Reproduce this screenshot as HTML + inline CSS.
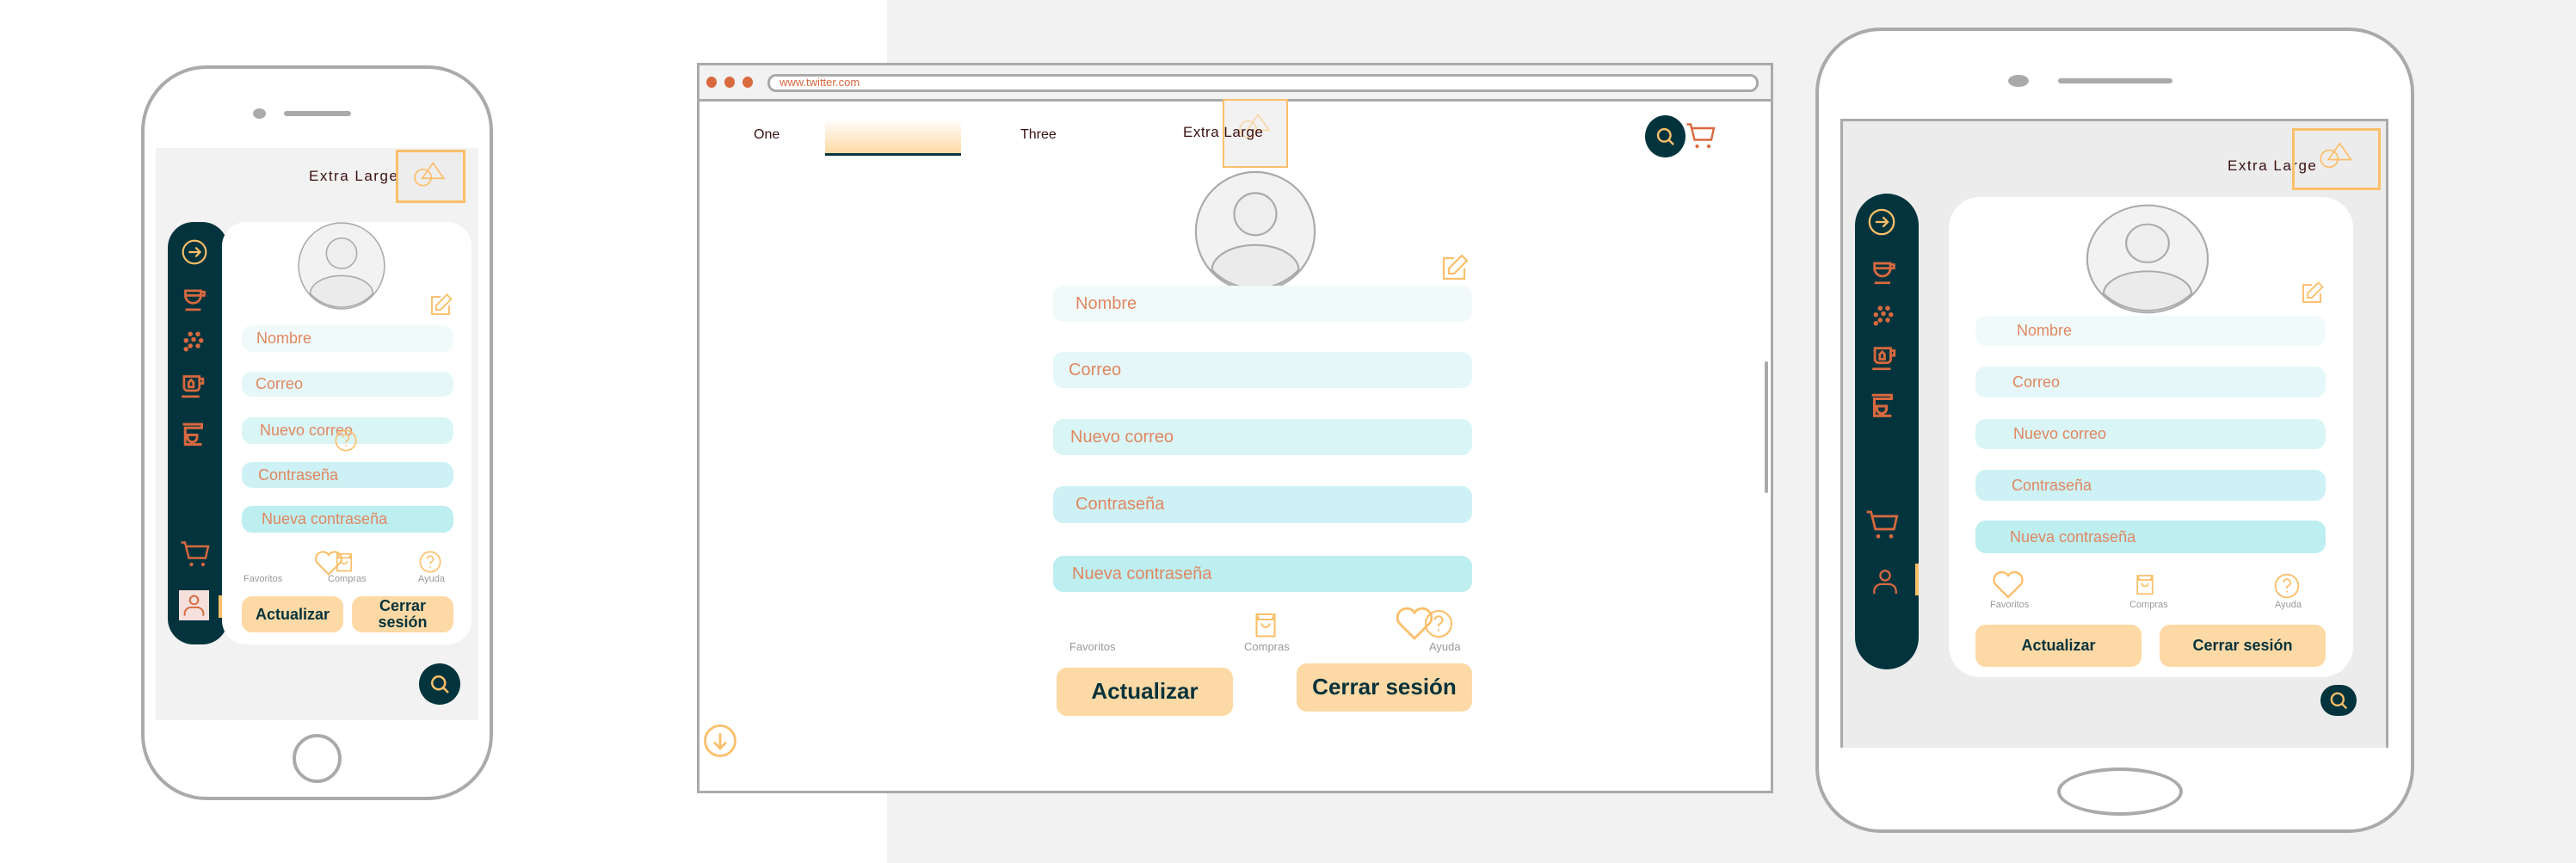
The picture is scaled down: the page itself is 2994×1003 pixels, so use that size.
<!DOCTYPE html>
<html><head><meta charset="utf-8">
<style>
*{margin:0;padding:0;box-sizing:border-box}
body{width:2994px;height:1003px;position:relative;overflow:hidden;background:#fff;font-family:"Liberation Sans",sans-serif}
.a{position:absolute}
.inp{position:absolute;border-radius:12px;color:#e08760;display:flex;align-items:center}
.btn{position:absolute;background:#fdd9a5;border-radius:12px;color:#05323b;font-weight:bold;display:flex;align-items:center;justify-content:center;text-align:center;line-height:1.05}
.lbl{position:absolute;color:#999;font-size:12px}
.xl{position:absolute;color:#3a1010;font-family:"Liberation Sans",sans-serif;letter-spacing:1.5px;white-space:nowrap}
.obox{position:absolute;border:3px solid #fbbf6a;background:#ededed}
svg.i{position:absolute;overflow:visible}
</style></head><body>
<svg width="0" height="0" style="position:absolute">
<defs>
<symbol id="arrow" viewBox="0 0 24 24"><circle cx="12" cy="12" r="10" fill="none" stroke="#fbbf6a" stroke-width="1.6"/><path d="M7 12h10M13 8l4 4-4 4" fill="none" stroke="#fbbf6a" stroke-width="1.6"/></symbol>
<symbol id="cup" viewBox="0 0 24 24"><path d="M4 5h13v4a6.5 6.5 0 0 1-13 0zM4 9h13M17 6h3v3h-3M4 21h13" fill="none" stroke="#d9693f" stroke-width="2"/></symbol>
<symbol id="dots" viewBox="0 0 24 24" fill="#d9693f"><circle cx="9" cy="5" r="2.2"/><circle cx="16" cy="5" r="2.2"/><circle cx="5" cy="11" r="2.2"/><circle cx="12" cy="10" r="2.2"/><circle cx="19" cy="11" r="2.2"/><circle cx="9" cy="16" r="2.2"/><circle cx="16" cy="16" r="2.2"/><circle cx="5" cy="19" r="2.2"/></symbol>
<symbol id="mug" viewBox="0 0 24 24"><path d="M5 4h13v9a3 3 0 0 1-3 3H8a3 3 0 0 1-3-3zM18 6h3v4h-3M3 21h15M9 9l2-2 2 2v4H9z" fill="none" stroke="#d9693f" stroke-width="2"/></symbol>
<symbol id="mach" viewBox="0 0 24 24"><path d="M4 3h16v3H6v14h14M7 6h10M8 12h8v2a4 4 0 0 1-8 0z" fill="none" stroke="#d9693f" stroke-width="2.2"/></symbol>
<symbol id="cart" viewBox="0 0 24 24"><path d="M1 3h3l3 12h13l2-9H5" fill="none" stroke="#d9693f" stroke-width="1.6"/><circle cx="9" cy="20" r="1.4" fill="#d9693f"/><circle cx="18" cy="20" r="1.4" fill="#d9693f"/></symbol>
<symbol id="user" viewBox="0 0 24 24"><circle cx="12" cy="7" r="4" fill="none" stroke="#d9693f" stroke-width="1.6"/><path d="M3 22v-2a6 6 0 0 1 6-6h6a6 6 0 0 1 6 6v2" fill="none" stroke="#d9693f" stroke-width="1.6"/></symbol>
<symbol id="heart" viewBox="0 0 24 24"><path d="M12 21L3 12a5 5 0 0 1 9-6 5 5 0 0 1 9 6z" fill="none" stroke="#fbbf6a" stroke-width="1.4"/></symbol>
<symbol id="bag" viewBox="0 0 24 24"><path d="M5 4h14v17H5zM5 8h14M5 4l2 4M19 4l-2 4M9 11a3 3 0 0 0 6 0" fill="none" stroke="#fbbf6a" stroke-width="1.4"/></symbol>
<symbol id="help" viewBox="0 0 24 24"><circle cx="12" cy="12" r="10" fill="none" stroke="#fbbf6a" stroke-width="1.4"/><path d="M9 9a3 3 0 1 1 4 3c-1 .5-1 1-1 2" fill="none" stroke="#fbbf6a" stroke-width="1.4"/><circle cx="12" cy="17" r=".8" fill="#fbbf6a"/></symbol>
<symbol id="edit" viewBox="0 0 24 24"><path d="M12 4H4v16h16v-8M18 2l4 4-10 10H8v-4z" fill="none" stroke="#fbbf6a" stroke-width="1.5"/></symbol>
<symbol id="shape" viewBox="0 0 40 30"><circle cx="13" cy="19" r="9" fill="none" stroke="#fbbf6a" stroke-width="1.6"/><path d="M24 3L36 20H12z" fill="none" stroke="#fbbf6a" stroke-width="1.6"/></symbol>
<symbol id="search" viewBox="0 0 24 24"><circle cx="11" cy="11" r="6" fill="none" stroke="#fbbf6a" stroke-width="2"/><path d="M15.5 15.5L20 20" stroke="#fbbf6a" stroke-width="2"/></symbol>
<symbol id="avatar" viewBox="0 0 100 100" preserveAspectRatio="none"><circle cx="50" cy="50" r="48" fill="#f2f2f2" stroke="#aaa" stroke-width="1.5"/><circle cx="50" cy="36" r="17" fill="#eee" stroke="#aaa" stroke-width="1.5"/><path d="M15 81a35 20 0 0 1 70 0a48 48 0 0 1-70 0z" fill="#ebebeb" stroke="#aaa" stroke-width="1.5"/></symbol>
</defs></svg>

<div class="a" style="left:1031px;top:0;width:1963px;height:1003px;background:#f2f2f2"></div>

<!-- PHONE -->
<div class="a" style="left:164px;top:76px;width:409px;height:854px;border:4px solid #aaa;border-radius:76px;background:#fff"></div>
<div class="a" style="left:294px;top:126px;width:15px;height:12px;border-radius:50%;background:#aaa"></div>
<div class="a" style="left:330px;top:129px;width:78px;height:6px;border-radius:3px;background:#aaa"></div>
<div class="a" style="left:340px;top:853px;width:57px;height:57px;border:4px solid #aaa;border-radius:50%"></div>
<div class="a" style="left:181px;top:172px;width:375px;height:665px;background:#f2f2f2"></div>
<div class="xl" style="left:359px;top:195px;font-size:17px">Extra Large</div>
<div class="obox" style="left:460px;top:174px;width:81px;height:62px"></div>
<svg class="i" style="left:478px;top:186px" width="42" height="32"><use href="#shape"/></svg>
<div class="a" style="left:195px;top:258px;width:70px;height:491px;background:#03343d;border-radius:30px"></div>
<div class="a" style="left:258px;top:258px;width:290px;height:491px;background:#fff;border-radius:28px"></div>
<svg class="i" style="left:210px;top:277px" width="32" height="32"><use href="#arrow"/></svg>
<svg class="i" style="left:210px;top:331px" width="33" height="33"><use href="#cup"/></svg>
<svg class="i" style="left:210px;top:382px" width="30" height="30"><use href="#dots"/></svg>
<svg class="i" style="left:207px;top:432px" width="33" height="33"><use href="#mug"/></svg>
<svg class="i" style="left:207px;top:489px" width="33" height="33"><use href="#mach"/></svg>
<svg class="i" style="left:209px;top:626px" width="36" height="36"><use href="#cart"/></svg>
<div class="a" style="left:208px;top:686px;width:35px;height:35px;background:#f5e0db"></div>
<svg class="i" style="left:211px;top:689px" width="29" height="29"><use href="#user"/></svg>
<div class="a" style="left:254px;top:692px;width:4px;height:26px;background:#fbbf6a"></div>
<svg class="i" style="left:345px;top:257px" width="104" height="104"><use href="#avatar"/></svg>
<svg class="i" style="left:497px;top:340px" width="30" height="30"><use href="#edit"/></svg>
<div class="inp" style="left:281px;top:378px;width:246px;height:31px;background:#f1fafb;font-size:18px;padding-left:17px">Nombre</div>
<div class="inp" style="left:281px;top:432px;width:246px;height:29px;background:#e5f7f9;font-size:18px;padding-left:16px">Correo</div>
<div class="inp" style="left:281px;top:485px;width:246px;height:31px;background:#d9f5f6;font-size:18px;padding-left:21px">Nuevo correo</div>
<svg class="i" style="left:388px;top:498px" width="28" height="28"><use href="#help"/></svg>
<div class="inp" style="left:281px;top:537px;width:246px;height:30px;background:#cdf1f4;font-size:18px;padding-left:19px">Contraseña</div>
<div class="inp" style="left:281px;top:588px;width:246px;height:31px;background:#bdeef0;font-size:18px;padding-left:23px">Nueva contraseña</div>
<svg class="i" style="left:364px;top:636px" width="36" height="36"><use href="#heart"/></svg>
<svg class="i" style="left:386px;top:639px" width="28" height="28"><use href="#bag"/></svg>
<svg class="i" style="left:486px;top:639px" width="28" height="28"><use href="#help"/></svg>
<div class="lbl" style="left:283px;top:667px;font-size:11px">Favoritos</div>
<div class="lbl" style="left:381px;top:667px;font-size:11px">Compras</div>
<div class="lbl" style="left:486px;top:667px;font-size:11px">Ayuda</div>
<div class="btn" style="left:281px;top:693px;width:118px;height:42px;font-size:18px">Actualizar</div>
<div class="btn" style="left:409px;top:693px;width:118px;height:42px;font-size:18px">Cerrar<br>sesión</div>
<div class="a" style="left:487px;top:771px;width:48px;height:48px;border-radius:50%;background:#03343d"></div>
<svg class="i" style="left:496px;top:780px" width="30" height="30"><use href="#search"/></svg>

<!-- BROWSER -->
<div class="a" style="left:810px;top:73px;width:1251px;height:849px;border:3px solid #aaa;background:#fff"></div>
<div class="a" style="left:813px;top:76px;width:1245px;height:42px;background:#f2f2f2;border-bottom:3px solid #aaa"></div>
<div class="a" style="left:821px;top:89px;width:12px;height:13px;border-radius:50%;background:#d9693f"></div>
<div class="a" style="left:842px;top:89px;width:12px;height:13px;border-radius:50%;background:#d9693f"></div>
<div class="a" style="left:863px;top:89px;width:12px;height:13px;border-radius:50%;background:#d9693f"></div>
<div class="a" style="left:892px;top:86px;width:1152px;height:21px;border:3px solid #aaa;border-radius:10px;background:#fff"></div>
<div class="a" style="left:906px;top:88px;font-size:13px;color:#d9693f">www.twitter.com</div>
<div class="a" style="left:876px;top:148px;font-size:16px;color:#3a1010">One</div>
<div class="a" style="left:959px;top:138px;width:158px;height:43px;background:linear-gradient(#fff,#fdd9a5);border-bottom:3px solid #03343d"></div>
<div class="a" style="left:1186px;top:148px;font-size:16px;color:#3a1010">Three</div>
<div class="obox" style="left:1421px;top:115px;width:76px;height:80px;border-width:2px;background:#f2f2f2"></div>
<svg class="i" style="left:1436px;top:130px;opacity:.5" width="44" height="32"><use href="#shape"/></svg>
<div class="xl" style="left:1375px;top:144px;font-size:17px;letter-spacing:0.5px">Extra Large</div>
<div class="a" style="left:1912px;top:134px;width:47px;height:49px;border-radius:50%;background:#03343d"></div>
<svg class="i" style="left:1921px;top:144px" width="29" height="29"><use href="#search"/></svg>
<svg class="i" style="left:1959px;top:140px" width="36" height="36"><use href="#cart"/></svg>
<svg class="i" style="left:1387px;top:197px" width="144" height="144"><use href="#avatar"/></svg>
<svg class="i" style="left:1672px;top:294px" width="36" height="36"><use href="#edit"/></svg>
<div class="inp" style="left:1224px;top:332px;width:487px;height:42px;background:#f1fafb;font-size:20px;padding-left:26px">Nombre</div>
<div class="inp" style="left:1224px;top:409px;width:487px;height:42px;background:#e5f7f9;font-size:20px;padding-left:18px">Correo</div>
<div class="inp" style="left:1224px;top:487px;width:487px;height:42px;background:#d9f5f6;font-size:20px;padding-left:20px">Nuevo correo</div>
<div class="inp" style="left:1224px;top:565px;width:487px;height:43px;background:#cdf1f4;font-size:20px;padding-left:26px">Contraseña</div>
<div class="inp" style="left:1224px;top:646px;width:487px;height:42px;background:#bdeef0;font-size:20px;padding-left:22px">Nueva contraseña</div>
<svg class="i" style="left:1453px;top:706px" width="36" height="40"><use href="#bag"/></svg>
<svg class="i" style="left:1620px;top:700px" width="48" height="48"><use href="#heart"/></svg>
<svg class="i" style="left:1654px;top:707px" width="36" height="36"><use href="#help"/></svg>
<div class="lbl" style="left:1243px;top:744px;font-size:13px">Favoritos</div>
<div class="lbl" style="left:1446px;top:744px;font-size:13px">Compras</div>
<div class="lbl" style="left:1661px;top:744px;font-size:13px">Ayuda</div>
<div class="btn" style="left:1228px;top:776px;width:205px;height:56px;font-size:26px">Actualizar</div>
<div class="btn" style="left:1507px;top:771px;width:204px;height:56px;font-size:26px">Cerrar sesión</div>
<svg class="i" style="left:816px;top:840px" width="42" height="42"><use href="#arrow" transform="rotate(90 21 21)"/></svg>
<div class="a" style="left:2051px;top:420px;width:4px;height:153px;background:#aaa;border-radius:2px"></div>

<!-- TABLET -->
<div class="a" style="left:2110px;top:32px;width:696px;height:936px;border:4px solid #aaa;border-radius:76px;background:#fff"></div>
<div class="a" style="left:2334px;top:87px;width:24px;height:14px;border-radius:50%;background:#aaa"></div>
<div class="a" style="left:2392px;top:91px;width:133px;height:6px;border-radius:3px;background:#aaa"></div>
<div class="a" style="left:2391px;top:892px;width:146px;height:56px;border:4px solid #aaa;border-radius:50%"></div>
<div class="a" style="left:2139px;top:138px;width:637px;height:731px;background:#ececec;border:3px solid #aaa;border-bottom:none"></div>
<div class="xl" style="left:2589px;top:183px;font-size:17px">Extra Large</div>
<div class="obox" style="left:2664px;top:149px;width:103px;height:72px;background:transparent"></div>
<svg class="i" style="left:2693px;top:163px" width="44" height="34"><use href="#shape"/></svg>
<div class="a" style="left:2156px;top:225px;width:74px;height:553px;background:#03343d;border-radius:38px"></div>
<div class="a" style="left:2265px;top:229px;width:470px;height:558px;background:#fff;border-radius:36px"></div>
<svg class="i" style="left:2170px;top:241px" width="34" height="34"><use href="#arrow"/></svg>
<svg class="i" style="left:2173px;top:299px" width="34" height="34"><use href="#cup"/></svg>
<svg class="i" style="left:2174px;top:352px" width="30" height="30"><use href="#dots"/></svg>
<svg class="i" style="left:2172px;top:399px" width="34" height="34"><use href="#mug"/></svg>
<svg class="i" style="left:2170px;top:455px" width="34" height="34"><use href="#mach"/></svg>
<svg class="i" style="left:2168px;top:590px" width="40" height="40"><use href="#cart"/></svg>
<svg class="i" style="left:2174px;top:659px" width="34" height="34"><use href="#user"/></svg>
<div class="a" style="left:2226px;top:655px;width:4px;height:37px;background:#fbbf6a"></div>
<svg class="i" style="left:2423px;top:236px" width="146" height="130"><use href="#avatar" width="146" height="130"/></svg>
<svg class="i" style="left:2672px;top:326px" width="30" height="30"><use href="#edit"/></svg>
<div class="inp" style="left:2296px;top:367px;width:407px;height:35px;background:#f1fafb;font-size:18px;padding-left:48px">Nombre</div>
<div class="inp" style="left:2296px;top:426px;width:407px;height:36px;background:#e5f7f9;font-size:18px;padding-left:43px">Correo</div>
<div class="inp" style="left:2296px;top:487px;width:407px;height:35px;background:#d9f5f6;font-size:18px;padding-left:44px">Nuevo correo</div>
<div class="inp" style="left:2296px;top:546px;width:407px;height:36px;background:#cdf1f4;font-size:18px;padding-left:42px">Contraseña</div>
<div class="inp" style="left:2296px;top:605px;width:407px;height:38px;background:#bdeef0;font-size:18px;padding-left:40px">Nueva contraseña</div>
<svg class="i" style="left:2314px;top:659px" width="40" height="40"><use href="#heart"/></svg>
<svg class="i" style="left:2478px;top:664px" width="30" height="30"><use href="#bag"/></svg>
<svg class="i" style="left:2642px;top:665px" width="32" height="32"><use href="#help"/></svg>
<div class="lbl" style="left:2313px;top:697px;font-size:11px">Favoritos</div>
<div class="lbl" style="left:2475px;top:697px;font-size:11px">Compras</div>
<div class="lbl" style="left:2644px;top:697px;font-size:11px">Ayuda</div>
<div class="btn" style="left:2296px;top:726px;width:193px;height:49px;font-size:18px">Actualizar</div>
<div class="btn" style="left:2510px;top:726px;width:193px;height:49px;font-size:18px">Cerrar sesión</div>
<div class="a" style="left:2697px;top:796px;width:42px;height:36px;border-radius:18px;background:#03343d"></div>
<svg class="i" style="left:2704px;top:800px" width="28" height="28"><use href="#search"/></svg>
</body></html>
